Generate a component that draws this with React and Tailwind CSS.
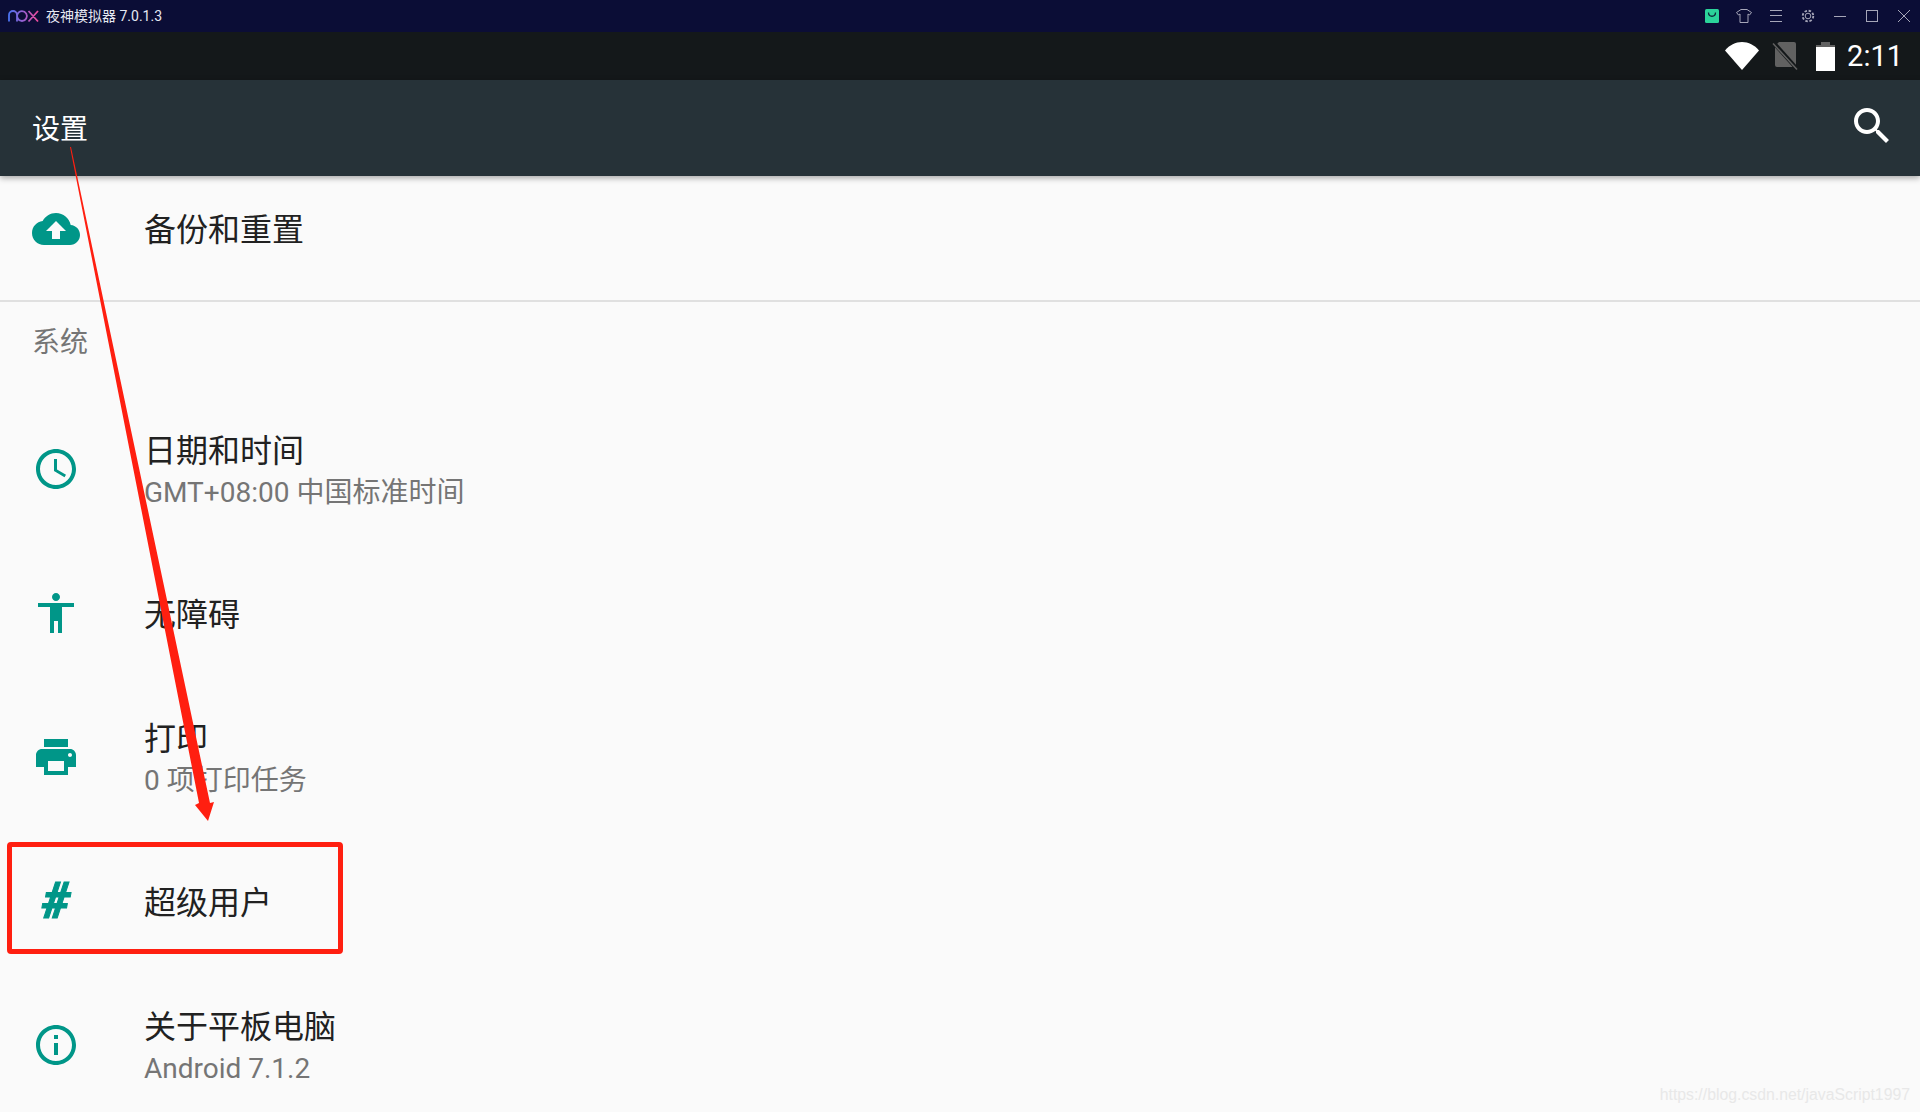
const FONT = "font-['Roboto','Noto_Sans_CJK_SC',sans-serif]";

const ICONS = {
  cloud: 'M19.35 10.04C18.67 6.59 15.64 4 12 4 9.11 4 6.6 5.64 5.35 8.04 2.34 8.36 0 10.91 0 14c0 3.31 2.69 6 6 6h13c2.76 0 5-2.24 5-5 0-2.64-2.05-4.78-4.65-4.96zM14 13v4h-4v-4H7l5-5 5 5h-3z',
  clock: 'M11.99 2C6.47 2 2 6.48 2 12s4.47 10 9.99 10C17.52 22 22 17.52 22 12S17.52 2 11.99 2zM12 20c-4.42 0-8-3.58-8-8s3.58-8 8-8 8 3.58 8 8-3.58 8-8 8zm.5-13H11v6l5.25 3.15.75-1.23-4.5-2.67z',
  person: 'M12 2c1.1 0 2 .9 2 2s-.9 2-2 2-2-.9-2-2 .9-2 2-2zm9 7h-6v13h-2v-6h-2v6H9V9H3V7h18v2z',
  print: 'M19 8H5c-1.66 0-3 1.34-3 3v6h4v4h12v-4h4v-6c0-1.66-1.34-3-3-3zm-3 11H8v-5h8v5zm3-7c-.55 0-1-.45-1-1s.45-1 1-1 1 .45 1 1-.45 1-1 1zm-1-9H6v4h12V3z',
  info: 'M11 17h2v-6h-2v6zm1-15C6.48 2 2 6.48 2 12s4.48 10 10 10 10-4.48 10-10S17.52 2 12 2zm0 18c-4.41 0-8-3.59-8-8s3.59-8 8-8 8 3.59 8 8-3.59 8-8 8zM11 9h2V7h-2v2z',
  search: 'M15.5 14h-.79l-.28-.27C15.41 12.59 16 11.11 16 9.5 16 5.91 13.09 3 9.5 3S3 5.91 3 9.5 5.91 16 9.5 16c1.61 0 3.09-.59 4.23-1.57l.27.28v.79l5 4.99L20.49 19l-4.99-5zm-6 0C7.01 14 5 11.99 5 9.5S7.01 5 9.5 5 14 7.01 14 9.5 11.99 14 9.5 14z',
};

function MaterialIcon({ name, className }) {
  return (
    <svg viewBox="0 0 24 24" className={className} fill="currentColor">
      <path d={ICONS[name]} />
    </svg>
  );
}

function NoxLogo() {
  return (
    <svg width="32" height="14" viewBox="0 0 32 14" fill="none" strokeWidth="1.8">
      <defs>
        <linearGradient id="nox" x1="0" x2="1" y1="0" y2="0">
          <stop offset="0" stopColor="#4a72f0" />
          <stop offset="0.5" stopColor="#9a5fd0" />
          <stop offset="1" stopColor="#ee4a9a" />
        </linearGradient>
      </defs>
      <path
        d="M1 12.500V6a4 4 0 0 1 8 0v6.500M14 2.200a4.900 4.900 0 1 1 -.01 0M20.500 2l9.500 10.500M30 2l-9.500 10.500"
        stroke="url(#nox)"
      />
    </svg>
  );
}

function WindowButtons() {
  const stroke = '#a6a6b8';
  return (
    <div className="flex">
      <div className="w-8 h-8 flex items-center justify-center">
        <svg width="14" height="14" viewBox="0 0 14 14">
          <rect width="14" height="14" rx="1.5" fill="#2bd39a" />
          <path d="M3.500 3.500c0 5 7 5 7 0" stroke="#0c2a3a" strokeWidth="1.3" fill="none" />
        </svg>
      </div>
      <div className="w-8 h-8 flex items-center justify-center">
        <svg width="16" height="14" viewBox="0 0 16 14" fill="none" stroke={stroke}>
          <path d="M5 .5h6l4.500 3-2 2.500-1.500-1v8.500H4v-8.500l-1.500 1-2-2.500z" />
        </svg>
      </div>
      <div className="w-8 h-8 flex items-center justify-center">
        <svg width="12" height="12" viewBox="0 0 12 12" stroke={stroke}>
          <path d="M0 .5h12M0 5.500h12M0 11.500h12" />
        </svg>
      </div>
      <div className="w-8 h-8 flex items-center justify-center">
        <svg width="14" height="14" viewBox="0 0 14 14" fill="none" stroke={stroke}>
          <circle cx="7" cy="7" r="2.800" />
          <circle cx="7" cy="7" r="5.300" strokeWidth="1.800" strokeDasharray="2.500 1.660" />
        </svg>
      </div>
      <div className="w-8 h-8 flex items-center justify-center">
        <div className="w-3 h-px bg-[#a6a6b8]" />
      </div>
      <div className="w-8 h-8 flex items-center justify-center">
        <div className="w-3 h-3 border border-[#a6a6b8]" />
      </div>
      <div className="w-8 h-8 flex items-center justify-center">
        <svg width="12" height="12" viewBox="0 0 12 12" stroke={stroke}>
          <path d="M0 0l12 12M12 0L0 12" />
        </svg>
      </div>
    </div>
  );
}

function StatusBar() {
  return (
    <div className="h-12 shrink-0 bg-[#14181a] flex items-center justify-end pr-[17px]">
      <svg width="34" height="28" viewBox="0 0 34 28" fill="#fff" className="mr-[13px]">
        <path d="M0 8.500C4.500 3 10.500 0 17 0s12.500 3 17 8.500L17 28z" />
      </svg>
      <svg width="26" height="30" viewBox="0 0 26 30" className="mr-[18px]">
        <path d="M7 1h15a2 2 0 0 1 2 2v21a2 2 0 0 1-2 2H5a2 2 0 0 1-2-2V5z" fill="#616161" />
        <path d="M1 1l24 27" stroke="#14181a" strokeWidth="4" />
        <path d="M1 2.500l24 26" stroke="#616161" strokeWidth="1.500" />
      </svg>
      <svg width="19" height="29" viewBox="0 0 19 29" className="mr-[12px]">
        <path d="M5 0h9v3h5v5H0V3h5z" fill="#616161" />
        <rect y="5" width="19" height="24" fill="#fff" />
      </svg>
      <span className="text-[29px] leading-none text-white font-['Roboto',sans-serif]">2:11</span>
    </div>
  );
}

function Row({ icon, title, subtitle }) {
  return (
    <div className="h-[144px] shrink-0 flex items-center pl-8">
      <div className="w-12 h-12 flex items-center justify-center text-[#009688] shrink-0">
        {icon}
      </div>
      <div className="ml-[64px] mt-[5px]">
        <div className="text-[32px] leading-[41px] text-[#212121]">{title}</div>
        {subtitle && <div className="text-[28px] leading-[41px] text-[#757575]">{subtitle}</div>}
      </div>
    </div>
  );
}

export default function App() {
  return (
    <div className={`relative w-[1920px] h-[1112px] overflow-hidden bg-[#fafafa] flex flex-col ${FONT}`}>
      {/* emulator title bar */}
      <div className="h-8 shrink-0 bg-[#0b0d36] flex items-center justify-between">
        <div className="flex items-center pl-2">
          <NoxLogo />
          <span className="ml-[6px] text-[14px] text-[#e6e8f2]">夜神模拟器 7.0.1.3</span>
        </div>
        <WindowButtons />
      </div>

      <StatusBar />

      {/* action bar */}
      <div className="relative z-10 h-24 shrink-0 bg-[#263238] flex items-center justify-between pl-8 pr-6 shadow-[0_2px_6px_rgba(0,0,0,0.35)]">
        <span className="text-[28px] text-white mt-1">设置</span>
        <MaterialIcon name="search" className="w-12 h-12 text-white -mt-[5px]" />
      </div>

      {/* settings list */}
      <div className="h-[126px] shrink-0 flex items-center pl-8 pb-[19px] border-b-2 border-[#e0e0e0]">
        <div className="w-12 h-12 flex items-center justify-center text-[#009688] shrink-0">
          <MaterialIcon name="cloud" className="w-12 h-12" />
        </div>
        <div className="ml-[64px] mt-[3px] text-[32px] text-[#212121]">备份和重置</div>
      </div>
      <div className="h-[95px] shrink-0 pl-8 pt-[21px] text-[28px] leading-[40px] text-[#757575]">系统</div>

      <Row
        icon={<MaterialIcon name="clock" className="w-12 h-12" />}
        title="日期和时间"
        subtitle="GMT+08:00 中国标准时间"
      />
      <Row icon={<MaterialIcon name="person" className="w-12 h-12" />} title="无障碍" />
      <Row
        icon={<MaterialIcon name="print" className="w-12 h-12" />}
        title="打印"
        subtitle="0 项打印任务"
      />
      <Row
        icon={<span className="text-[50px] leading-none font-black italic [-webkit-text-stroke:1px_#009688]">#</span>}
        title="超级用户"
      />
      <Row
        icon={<MaterialIcon name="info" className="w-12 h-12" />}
        title="关于平板电脑"
        subtitle="Android 7.1.2"
      />

      {/* red annotations */}
      <div className="absolute z-20 left-[7px] top-[842px] w-[336px] h-[112px] border-[5px] border-[#ff1f10] rounded-[4px]" />
      <svg className="absolute z-20 left-0 top-0 pointer-events-none" width="300" height="840" viewBox="0 0 300 840">
        <polygon points="70,147 71,147 210,803 214,802 208,821 195,805 199,803" fill="#ff1f10" />
      </svg>

      <div className="absolute right-[10px] bottom-[5px] text-[15.8px] font-['Liberation_Sans',sans-serif] text-[#e8e8e8]">
        https://blog.csdn.net/javaScript1997
      </div>
    </div>
  );
}
